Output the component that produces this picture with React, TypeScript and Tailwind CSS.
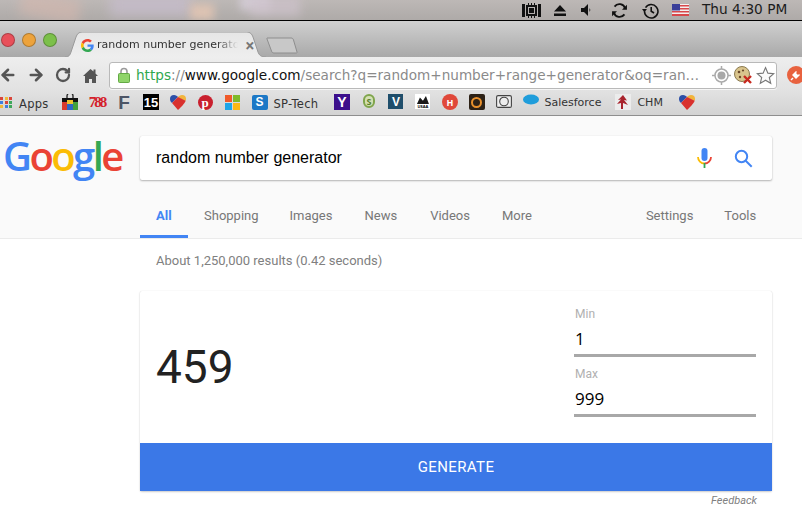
import { ArrowLeft, ArrowRight, RotateCw } from "lucide-react";

const chromeFont = "font-['DejaVu_Sans',sans-serif]";

const GoogleG = ({ size = 16 }: { size?: number }) => (
  <svg width={size} height={size} viewBox="0 0 48 48">
    <path fill="#EA4335" d="M24 9.5c3.5 0 6.7 1.2 9.2 3.600l6.900-6.900C35.900 2.400 30.400 0 24 0 14.600 0 6.500 5.400 2.600 13.200l8 6.200C12.500 13.700 17.800 9.500 24 9.500z" />
    <path fill="#4285F4" d="M46.900 24.500c0-1.600-.1-3.100-.4-4.500H24v9h12.900c-.6 3-2.200 5.500-4.700 7.200l7.700 6c4.500-4.200 7-10.300 7-17.700z" />
    <path fill="#FBBC05" d="M10.500 28.600c-.5-1.400-.8-3-.8-4.600s.3-3.200.8-4.600l-8-6.200C.9 16.500 0 20.100 0 24s.9 7.500 2.600 10.800l7.900-6.200z" />
    <path fill="#34A853" d="M24 48c6.500 0 11.900-2.100 15.900-5.800l-7.700-6c-2.100 1.400-4.900 2.300-8.200 2.300-6.200 0-11.500-4.200-13.400-9.900l-8 6.200C6.500 42.600 14.600 48 24 48z" />
  </svg>
);

const Light = ({ color }: { color: string }) => (
  <div className={`h-[14px] w-[14px] rounded-full border border-black/25 ${color}`} />
);

const MenuBar = () => (
  <div className="relative flex h-[21px] items-center overflow-hidden border-b border-black bg-gradient-to-b from-[#bdb8b6] to-[#aeaaa8]">
    <div className="absolute left-[20px] top-[-6px] h-[26px] w-[60px] rotate-12 bg-[#d6b8ae] opacity-60 blur-[6px]" />
    <div className="absolute left-[110px] top-[-6px] h-[22px] w-[80px] bg-[#c6bccb] opacity-80 blur-[6px]" />
    <div className="absolute left-[190px] top-[4px] h-[16px] w-[24px] bg-[#e8c8b4] opacity-80 blur-[4px]" />
    <div className="absolute left-[240px] top-[-6px] h-[16px] w-[30px] bg-[#d8d0dc] opacity-80 blur-[4px]" />
    <div className="absolute left-[250px] top-[-4px] h-[20px] w-[50px] bg-[#cfc3cd] opacity-70 blur-[5px]" />
    <div className="relative ml-[522px] flex items-center">
      <svg width="19" height="15" viewBox="0 0 19 15" fill="#111">
        <rect x="0" y="1" width="3" height="13" />
        <rect x="16" y="1" width="3" height="13" />
        <path fillRule="evenodd" d="M4 2h11v11H4zM6 4v7h7V4z" />
        <rect x="7" y="5" width="5" height="5" />
        <path d="M6 0h1v2H6zM9 0h1v2H9zM12 0h1v2h-1zM6 13h1v2H6zM9 13h1v2H9zM12 13h1v2h-1z" />
      </svg>
      <svg className="ml-[13px]" width="12" height="11" viewBox="0 0 12 11" fill="#111">
        <path d="M6 0l6 6.500H0zM0 8.500h12V11H0z" />
      </svg>
      <svg className="ml-[15px]" width="12" height="12" viewBox="0 0 12 12" fill="#111">
        <path d="M0 4h3l4-4v12L3 8H0z" />
        <path d="M8.500 4a3 3 0 0 1 0 4z" />
      </svg>
      <svg className="ml-[18px]" width="17" height="17" viewBox="0 0 24 24" fill="none" stroke="#111" strokeWidth="2.600">
        <path d="M20 9a8.500 8.500 0 0 0-15-2.500" />
        <path d="M4 15a8.500 8.500 0 0 0 15 2.500" />
        <path d="M22.500 4v7h-7z" fill="#111" stroke="none" />
        <path d="M1.500 20v-7h7z" fill="#111" stroke="none" />
      </svg>
      <svg className="ml-[14px]" width="17" height="17" viewBox="0 0 24 24" fill="none" stroke="#111" strokeWidth="2.200">
        <path d="M5 8a9.500 9.500 0 1 1-1.500 5" />
        <path d="M0 11h7l-3.500 4.500z" fill="#111" stroke="none" transform="translate(0 -1)" />
        <path d="M13 7v6l4 2.500" />
      </svg>
      <svg className="ml-[13px]" width="17" height="12" viewBox="0 0 17 12">
        <rect width="17" height="12" fill="#f4f0f0" />
        <path d="M0 1h17v1.500H0zM0 4h17v1.500H0zM0 7h17v1.500H0zM0 10h17v2H0z" fill="#d8474a" />
        <rect width="8" height="6.500" fill="#3b3f99" />
      </svg>
      <span className={`${chromeFont} ml-[13px] whitespace-nowrap text-[13.700px] leading-none text-[#1c1c1c]`}>Thu 4:30 PM</span>
    </div>
  </div>
);

const TabStrip = () => (
  <div className="flex h-[36px] bg-gradient-to-b from-[#d0d0d0] to-[#a9a9a9]">
    <div className="ml-[1px] mt-[12px] flex h-[14px] gap-[7px]">
      <Light color="bg-[#e8505a]" />
      <Light color="bg-[#eda33c]" />
      <Light color="bg-[#7cc04a]" />
    </div>
    <div className="relative ml-[8px] mt-[11px] flex h-[25px] w-[203px] items-center pl-[16px] pt-[2px]">
      <svg className="absolute left-0 top-0" width="203" height="25" viewBox="0 0 203 25">
        <defs>
          <linearGradient id="tabFill" x1="0" y1="0" x2="0" y2="1">
            <stop offset="0" stopColor="#e6e6e6" />
            <stop offset="1" stopColor="#eeeeee" />
          </linearGradient>
        </defs>
        <path d="M0 25c4 0 5-2 6-5l5-15c1-3 3-5 6-5h165c3 0 5 2 6 5l5 15c1 3 3 5 8 5z" fill="url(#tabFill)" />
        <path d="M0 25c4 0 5-2 6-5l5-15c1-3 3-5 6-5h165c3 0 5 2 6 5l5 15c1 3 3 5 8 5" fill="none" stroke="#9a9a9a" strokeWidth="1" />
      </svg>
      <div className="relative flex items-center">
        <GoogleG size={13} />
        <span className={`${chromeFont} ml-[3px] w-[141px] overflow-hidden whitespace-nowrap text-[11px] text-[#333] [mask-image:linear-gradient(to_right,black_85%,transparent)]`}>
          random number generator
        </span>
        <span className="ml-[7px] text-[17px] font-bold leading-none text-[#777]">×</span>
      </div>
    </div>
    <svg className="ml-[-2px] mt-[16px]" width="32" height="17" viewBox="0 0 32 17">
      <path d="M1 1h24c1.500 0 2 .6 2.500 2L31 15c.2.800-.2 1-1 1H8c-1.500 0-2-.6-2.500-2L1 2c-.2-.6 0-1 0-1z" fill="#c8c8c8" stroke="#8e8e8e" />
    </svg>
  </div>
);

const Toolbar = () => (
  <div className="flex h-[33px] items-center overflow-hidden bg-gradient-to-b from-[#eeeeee] to-[#e2e2e2] pt-[3px]">
    <ArrowLeft className="ml-[-1px] shrink-0" size={18} strokeWidth={3.400} color="#555" />
    <ArrowRight className="ml-[10px] shrink-0" size={18} strokeWidth={3.400} color="#555" />
    <RotateCw className="ml-[10px] shrink-0" size={16} strokeWidth={3.400} color="#555" />
    <svg className="ml-[12px] shrink-0" width="15" height="15" viewBox="0 0 15 15" fill="#555">
      <path d="M7.500 1L0 8h2v7h4v-4h3v4h4V8h2l-2.500-2.500V1.500h-2V3.500z" />
    </svg>
    <div className="ml-[11px] flex h-[27px] w-[668px] shrink-0 items-center rounded-[3px] border border-[#b9b9b9] bg-white pl-[8px] shadow-[0_1px_0_#f6f6f6]">
      <svg width="12" height="16" viewBox="0 0 12 16">
        <path d="M3 7V4.500a3 3 0 0 1 6 0V7" fill="none" stroke="#9a9a9a" strokeWidth="1.600" />
        <rect x="0.500" y="6.500" width="11" height="9" rx="1" fill="#8fd46a" stroke="#63a945" />
      </svg>
      <span className={`${chromeFont} ml-[6px] w-[570px] whitespace-nowrap text-[13.600px] text-[#8a8a8a]`}>
        <span className="text-[#2fa84f]">https</span>://<span className="text-[#111]">www.google.com</span>/search?q=random+number+range+generator&amp;oq=ran…
      </span>
      <svg className="ml-[6px]" width="19" height="19" viewBox="0 0 19 19">
        <circle cx="9.500" cy="9.500" r="6.500" fill="none" stroke="#aaa" strokeWidth="1.500" />
        <circle cx="9.500" cy="9.500" r="4" fill="#a8a8a8" />
        <path d="M9.500 0v3M9.500 16v3M0 9.500h3M16 9.500h3" stroke="#aaa" strokeWidth="1.500" />
      </svg>
      <svg className="ml-[3px]" width="19" height="19" viewBox="0 0 19 19">
        <circle cx="8" cy="8" r="7.500" fill="#d9c48c" stroke="#8a7a50" />
        <circle cx="5" cy="6" r="1.300" fill="#6b4a2a" />
        <circle cx="9" cy="4.500" r="1.100" fill="#6b4a2a" />
        <circle cx="6" cy="11" r="1.200" fill="#6b4a2a" />
        <path d="M10 10l7 7M17 10l-7 7" stroke="#c8281e" strokeWidth="2.400" />
      </svg>
      <svg className="ml-[3px]" width="19" height="19" viewBox="0 0 24 24" fill="#fbfbfb" stroke="#777" strokeWidth="1.400">
        <path d="M12 2l3 7 7.500.6-5.700 4.900 1.800 7.400L12 18l-6.600 3.900 1.800-7.400L1.500 9.600 9 9z" />
      </svg>
    </div>
    <div className="ml-[10px] flex h-[18px] w-[18px] shrink-0 items-center justify-center rounded-full bg-[#e8623f]">
      <svg width="12" height="12" viewBox="0 0 12 12" fill="#fff">
        <path d="M2 6l4-4 1 1-1 1 2 2 1-1 1 1-4 4z" />
        <path d="M1 11l2-2" stroke="#fff" strokeWidth="1.500" />
      </svg>
    </div>
  </div>
);

const Slot = ({ children }: { children: React.ReactNode }) => (
  <div className="flex w-[27px] shrink-0 justify-center">{children}</div>
);

const BookmarkLabel = ({ children }: { children: React.ReactNode }) => (
  <span className={`${chromeFont} whitespace-nowrap text-[11.500px] tracking-[0.3px] text-[#333]`}>{children}</span>
);

const Heart = () => (
  <svg width="16" height="15" viewBox="0 0 16 15">
    <path d="M0 4a4 4 0 0 1 4-4c2 0 3 1 4 2L2 8C1 7 0 6 0 4z" fill="#2d4fa8" />
    <path d="M8 2c1-1 2-2 4-2a4 4 0 0 1 4 4c0 .6-.1 1.200-.3 1.700L9 3z" fill="#f2b53c" />
    <path d="M2 8l6-6 7.700 3.700C14.500 9 10 13 8 15z" fill="#d9312e" />
  </svg>
);

const BookmarkBar = () => (
  <div className="flex h-[26px] items-center overflow-hidden border-b border-[#8e8e8e] bg-gradient-to-b from-[#e2e2e2] to-[#d3d3d3] pb-[1px]">
    <div className="grid w-[13px] shrink-0 grid-cols-3 gap-[1px]">
      {["#d9453b", "#f0b93a", "#d9453b", "#3f7fe0", "#d9453b", "#3fa85a", "#f0b93a", "#3f7fe0", "#3fa85a"].map((c, i) => (
        <div key={i} className="h-[3px] w-[3px]" style={{ backgroundColor: c }} />
      ))}
    </div>
    <div className="ml-[6px] w-[37.500px] shrink-0">
      <BookmarkLabel>Apps</BookmarkLabel>
    </div>
    <Slot>
      <svg width="16" height="16" viewBox="0 0 16 16">
        <path d="M5 4V2a3 3 0 0 1 6 0v2" fill="none" stroke="#222" strokeWidth="1.300" />
        <rect y="4" width="16" height="4" fill="#111" />
        <rect y="8" width="5" height="8" fill="#d93a2b" />
        <rect x="5" y="8" width="6" height="8" fill="#2e66c4" />
        <rect x="11" y="8" width="5" height="8" fill="#43a03b" />
        <rect x="5" y="6" width="6" height="4" fill="#f0c12c" />
      </svg>
    </Slot>
    <Slot>
      <span className="font-['Liberation_Serif',serif] text-[15px] font-bold leading-none tracking-[-2px] text-[#d4202a]">788</span>
    </Slot>
    <Slot>
      <span className="font-['Liberation_Sans',sans-serif] text-[19px] font-bold leading-none text-[#4c5566]">F</span>
    </Slot>
    <Slot>
      <span className="flex h-[16px] w-[16px] items-center justify-center bg-black font-['Liberation_Sans',sans-serif] text-[13px] font-bold leading-none text-white">15</span>
    </Slot>
    <Slot>
      <Heart />
    </Slot>
    <Slot>
      <span className="flex h-[15px] w-[15px] items-center justify-center rounded-full bg-[#c9202e] font-['Liberation_Serif',serif] text-[13px] font-bold leading-none text-white">p</span>
    </Slot>
    <Slot>
      <div className="grid h-[15px] w-[15px] grid-cols-2 gap-[1px]">
        <div className="bg-[#f05a2a]" />
        <div className="bg-[#7fba2a]" />
        <div className="bg-[#1fa5e8]" />
        <div className="bg-[#fcb814]" />
      </div>
    </Slot>
    <div className="ml-[6px] flex shrink-0 items-center">
      <span className="flex h-[15px] w-[16px] items-center justify-center rounded-[2px] bg-[#1c78c6] font-['Liberation_Sans',sans-serif] text-[12px] font-bold leading-none text-white">S</span>
      <span className="ml-[6px]"><BookmarkLabel>SP-Tech</BookmarkLabel></span>
    </div>
    <div className="ml-[10px] flex shrink-0">
      <Slot>
        <span className="flex h-[16px] w-[16px] items-center justify-center bg-[#3c0f8c] font-['Liberation_Sans',sans-serif] text-[14px] font-bold leading-none text-white">Y</span>
      </Slot>
      <Slot>
        <span className="flex h-[14px] w-[12px] items-center justify-center rounded-full border-2 border-[#7fa54c] bg-[#d4e0b4] text-[9px] font-bold leading-none text-[#5a7f2e]">S</span>
      </Slot>
      <Slot>
        <span className="flex h-[15px] w-[15px] items-center justify-center bg-[#1f4e6b] font-['Liberation_Sans',sans-serif] text-[12px] font-bold leading-none text-white">V</span>
      </Slot>
      <Slot>
        <div className="flex h-[15px] w-[15px] flex-col items-center justify-end bg-white">
          <div className="h-[8px] w-[12px] bg-[#1a1a1a] [clip-path:polygon(0_100%,25%_20%,50%_60%,75%_0,100%_100%)]" />
          <span className="text-[4px] font-bold leading-[5px] text-black">USAA</span>
        </div>
      </Slot>
      <Slot>
        <span className="flex h-[16px] w-[16px] items-center justify-center rounded-full bg-[#e0483a] text-[9px] font-bold leading-none text-white">H</span>
      </Slot>
      <Slot>
        <span className="flex h-[16px] w-[16px] items-center justify-center rounded-[2px] bg-[#2c2116]">
          <span className="h-[11px] w-[11px] rounded-full border-2 border-[#e8902c]" />
        </span>
      </Slot>
      <Slot>
        <svg width="16" height="14" viewBox="0 0 16 14" fill="#eee" stroke="#444" strokeWidth="1.100">
          <rect x="0.600" y="1.600" width="14.800" height="11.800" rx="1.500" />
          <circle cx="8" cy="7.500" r="4.300" />
        </svg>
      </Slot>
      <Slot>
        <svg width="16" height="11" viewBox="0 0 16 11" fill="#1f9ddb">
          <ellipse cx="8" cy="5.500" rx="8" ry="5" />
        </svg>
      </Slot>
    </div>
    <div className="w-[71px] shrink-0">
      <span className={`${chromeFont} block whitespace-nowrap text-[11px] leading-none text-[#333]`}>Salesforce</span>
    </div>
    <div className="flex shrink-0 items-center">
      <svg width="16" height="16" viewBox="0 0 16 16">
        <rect width="16" height="16" fill="#ececec" />
        <path d="M8 1L3 6l3-.5L2 10l4-1v6h2V9l5 2-4-5 3 .5z" fill="#a8232c" />
      </svg>
      <span className={`${chromeFont} ml-[6px] whitespace-nowrap text-[11px] leading-none text-[#333]`}>CHM</span>
    </div>
    <div className="ml-[16px] shrink-0">
      <Heart />
    </div>
  </div>
);

const GoogleLogo = () => (
  <span className="mb-[4px] ml-[3px] w-[137px] shrink-0 whitespace-nowrap font-['Open_Sans',sans-serif] text-[40px] font-semibold leading-none tracking-[-2.600px]">
    <span className="text-[#4285f4]">G</span>
    <span className="text-[#ea4335]">o</span>
    <span className="text-[#fbbc05]">o</span>
    <span className="text-[#4285f4]">g</span>
    <span className="text-[#34a853]">l</span>
    <span className="text-[#ea4335]">e</span>
  </span>
);

const SearchHeader = () => (
  <div className="border-b border-[#ebebeb] bg-[#fafafa] font-['Roboto',sans-serif]">
    <div className="flex items-center pt-[20px]">
      <GoogleLogo />
      <div className="flex h-[44px] w-[632px] shrink-0 items-center rounded-[2px] bg-white pl-[16px] shadow-[0_1px_2px_rgba(0,0,0,0.28),0_0_1px_rgba(0,0,0,0.12)]">
        <span className="w-[541px] font-['Liberation_Sans',sans-serif] text-[16px] text-black">random number generator</span>
        <svg width="15" height="21" viewBox="0 0 15 21">
          <rect x="4.500" y="0" width="6" height="13" rx="3" fill="#4285f4" />
          <path d="M1 9a6.500 6.500 0 0 0 6.500 6.500" fill="none" stroke="#fbbc05" strokeWidth="1.800" />
          <path d="M14 9a6.500 6.500 0 0 1-6.500 6.500" fill="none" stroke="#ea4335" strokeWidth="1.800" />
          <path d="M7.500 15v5" stroke="#34a853" strokeWidth="1.800" />
        </svg>
        <svg className="ml-[22px]" width="19" height="19" viewBox="0 0 19 19" fill="none" stroke="#4285f4" strokeWidth="2">
          <circle cx="7.500" cy="7.500" r="5.700" />
          <path d="M11.700 11.700l6 6" />
        </svg>
      </div>
    </div>
    <div className="ml-[140px] mt-[22px] flex h-[36px] items-start text-[13px] text-[#777]">
      <span className="h-[36px] w-[48px] border-b-[3px] border-[#4285f4] pl-[16px] pt-[4px] font-bold text-[#4285f4]">All</span>
      <span className="ml-[16px] pt-[4px]">Shopping</span>
      <span className="ml-[31px] pt-[4px]">Images</span>
      <span className="ml-[32px] pt-[4px]">News</span>
      <span className="ml-[33px] pt-[4px]">Videos</span>
      <span className="ml-[32px] pt-[4px]">More</span>
      <span className="ml-[114px] pt-[4px]">Settings</span>
      <span className="ml-[31px] pt-[4px]">Tools</span>
    </div>
  </div>
);

const RangeField = ({ label, value }: { label: string; value: string }) => (
  <div className="w-[182px]">
    <div className="pl-[1px] text-[12px] leading-[16px] text-[#b0b0b0]">{label}</div>
    <div className="h-[35px] border-b-[3px] border-[#a8a8a8] pl-[1px] pt-[1px] font-['Open_Sans',sans-serif] text-[17px] leading-[31px] text-black">{value}</div>
  </div>
);

const GeneratorCard = () => (
  <div className="ml-[140px] mt-[21px] w-[632px] rounded-[2px] bg-white shadow-[0_1px_2px_rgba(0,0,0,0.2),0_0_1px_rgba(0,0,0,0.15)]">
    <div className="flex h-[152px]">
      <div className="flex w-[434px] items-center pl-[16px] text-[46px] font-normal text-[#222]">459</div>
      <div className="flex flex-col gap-[9px] pt-[15px]">
        <RangeField label="Min" value="1" />
        <RangeField label="Max" value="999" />
      </div>
    </div>
    <div className="flex h-[48px] items-center justify-center bg-[#3b78e7] text-[15px] tracking-[0.4px] text-white">GENERATE</div>
  </div>
);

export default function App() {
  return (
    <div className="h-[506px] w-[802px] overflow-hidden bg-white">
      <MenuBar />
      <TabStrip />
      <Toolbar />
      <BookmarkBar />
      <SearchHeader />
      <div className="font-['Roboto',sans-serif]">
        <div className="ml-[156px] mt-[13px] text-[13px] leading-[18px] text-[#808080]">About 1,250,000 results (0.42 seconds)</div>
        <GeneratorCard />
        <div className="mr-[45px] mt-[5px] text-right text-[11px] italic leading-[10px] text-[#808080]">Feedback</div>
      </div>
    </div>
  );
}
